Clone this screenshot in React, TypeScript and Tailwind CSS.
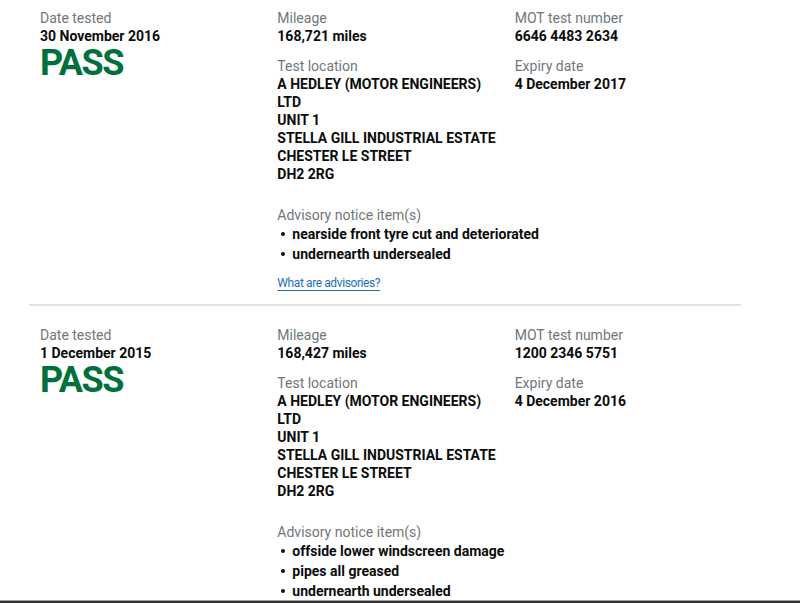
import React from "react";

type Test = {
  date: string;
  mileage: string;
  number: string;
  expiry: string;
  advisories: string[];
};

const tests: Test[] = [
  {
    date: "30 November 2016",
    mileage: "168,721 miles",
    number: "6646 4483 2634",
    expiry: "4 December 2017",
    advisories: ["nearside front tyre cut and deteriorated", "undernearth undersealed"],
  },
  {
    date: "1 December 2015",
    mileage: "168,427 miles",
    number: "1200 2346 5751",
    expiry: "4 December 2016",
    advisories: ["offside lower windscreen damage", "pipes all greased", "undernearth undersealed"],
  },
];

const address = [
  "A HEDLEY (MOTOR ENGINEERS)",
  "LTD",
  "UNIT 1",
  "STELLA GILL INDUSTRIAL ESTATE",
  "CHESTER LE STREET",
  "DH2 2RG",
];

function Label({ children }: { children: React.ReactNode }) {
  return <div className="text-[14px] leading-[18px] text-[#6f777b]">{children}</div>;
}

function Value({ children }: { children: React.ReactNode }) {
  return <div className="text-[14px] leading-[18px] font-bold text-[#0b0c0c] whitespace-nowrap">{children}</div>;
}

function Section({ t, first }: { t: Test; first: boolean }) {
  return (
    <div className={`grid grid-cols-3 ${first ? "pt-[9px]" : "pt-[20px]"} pb-[12px]`}>
      <div className="pl-[11px]">
        <Label>Date tested</Label>
        <Value>{t.date}</Value>
        <div className="text-[36px] leading-[36px] font-bold text-[#00703c] tracking-[-1.5px]">PASS</div>
      </div>
      <div className="pl-[11px]">
        <Label>Mileage</Label>
        <Value>{t.mileage}</Value>
        <div className="mt-[12px]">
          <Label>Test location</Label>
          {address.map((l) => (
            <Value key={l}>{l}</Value>
          ))}
        </div>
        <div className="mt-[23px] w-[400px]">
          <Label>Advisory notice item(s)</Label>
          <ul>
            {t.advisories.map((a, i) => (
              <li key={i} className="flex items-center text-[14px] leading-[20px] font-bold text-[#0b0c0c]">
                <span className="w-[15px] flex pl-[4px]">
                  <span className="w-[4px] h-[4px] rounded-full bg-[#0b0c0c]" />
                </span>
                <span className="whitespace-nowrap">{a}</span>
              </li>
            ))}
          </ul>
          {first && (
            <div className="mt-[10px] text-[12px] leading-[18px] tracking-[-0.4px]">
              <a href="#" className="text-[#1d70b8] underline underline-offset-[3px] decoration-1">
                What are advisories?
              </a>
            </div>
          )}
        </div>
      </div>
      <div className="pl-[11px]">
        <Label>MOT test number</Label>
        <Value>{t.number}</Value>
        <div className="mt-[12px]">
          <Label>Expiry date</Label>
          <Value>{t.expiry}</Value>
        </div>
      </div>
    </div>
  );
}

export default function App() {
  return (
    <div className="h-[603px] w-[800px] flex flex-col overflow-hidden bg-white" style={{ fontFamily: "Roboto, 'Liberation Sans', Arial, sans-serif" }}>
      <div className="flex-1 min-h-0 overflow-hidden">
        <div className="ml-[29px] w-[712px]">
          {tests.map((t, i) => (
            <React.Fragment key={i}>
              {i > 0 && <div className="h-[2px] bg-[#e2e2e2]" />}
              <Section t={t} first={i === 0} />
            </React.Fragment>
          ))}
        </div>
      </div>
      <div className="h-[1px] bg-[#a0a0a0]" />
      <div className="h-[2px] bg-[#333333]" />
    </div>
  );
}
